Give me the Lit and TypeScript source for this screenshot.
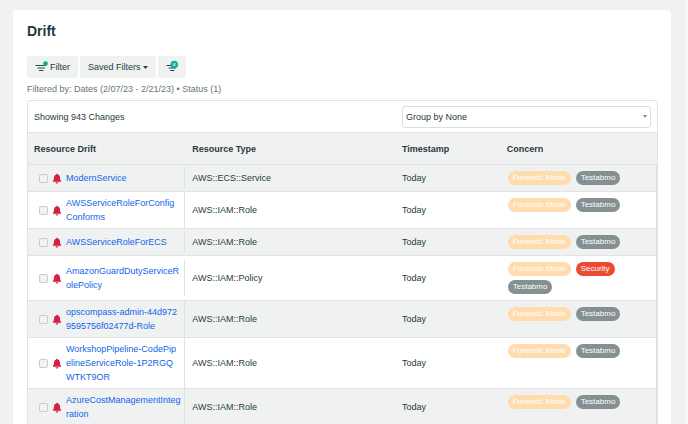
import { LitElement, html, css, svg } from "lit";
import { customElement } from "lit/decorators.js";

type Tone = "amber" | "grey" | "red";

interface Tag {
  label: string;
  tone: Tone;
}

interface DriftRow {
  // Parts of the resource name, with a break opportunity between them
  name: string[];
  type: string;
  time: string;
  tags: Tag[];
}

const FORENSIC: Tag = { label: "Forensic Mode", tone: "amber" };
const TEST: Tag = { label: "Testabmo", tone: "grey" };
const SECURITY: Tag = { label: "Security", tone: "red" };

const ROWS: DriftRow[] = [
  { name: ["ModernService"], type: "AWS::ECS::Service", time: "Today", tags: [FORENSIC, TEST] },
  { name: ["AWSServiceRoleForConfig", "Conforms"], type: "AWS::IAM::Role", time: "Today", tags: [FORENSIC, TEST] },
  { name: ["AWSServiceRoleForECS"], type: "AWS::IAM::Role", time: "Today", tags: [FORENSIC, TEST] },
  { name: ["AmazonGuardDutyServiceR", "olePolicy"], type: "AWS::IAM::Policy", time: "Today", tags: [FORENSIC, SECURITY, TEST] },
  { name: ["opscompass-admin-44d972", "9595756f02477d-Role"], type: "AWS::IAM::Role", time: "Today", tags: [FORENSIC, TEST] },
  { name: ["WorkshopPipeline-CodePip", "elineServiceRole-1P2RGQ", "WTKT9OR"], type: "AWS::IAM::Role", time: "Today", tags: [FORENSIC, TEST] },
  { name: ["AzureCostManagementInteg", "ration"], type: "AWS::IAM::Role", time: "Today", tags: [FORENSIC, TEST] },
];

const filterLines = svg`
  <path d="M1 4.5H11M3 7H9.5M4.5 9.5H8" stroke="#2f4349" stroke-width="1" fill="none" stroke-linecap="round"/>`;

@customElement("app-root")
export class AppRoot extends LitElement {
  static styles = css`
    :host {
      display: block;
      box-sizing: border-box;
      height: 100vh;
      overflow-y: auto;
      scrollbar-width: none;
      padding: 10px 15px 0 13px;
      border-right: 2px solid #f8f9f9;
      background: #f0f2f2;
      color: #263a40;
      font: 9px/14px "Liberation Sans", Arial, sans-serif;
    }
    * {
      box-sizing: border-box;
    }
    .card {
      background: #fff;
      border-radius: 4px;
      padding: 12px 13px 14px 14px;
    }
    h1 {
      margin: 0 0 16px;
      font-size: 14px;
      line-height: 18px;
    }
    .actions {
      display: flex;
      gap: 2px;
    }
    .btn {
      display: flex;
      align-items: center;
      gap: 2px;
      height: 22px;
      padding: 0 8px;
      border: 0;
      border-radius: 2px;
      background: #f0f2f2;
      color: inherit;
      font: inherit;
    }
    .icon {
      display: block;
      overflow: visible;
    }
    .summary {
      margin: 4px 0;
      color: #66757a;
    }
    .panel {
      border: 1px solid #e1e4e4;
      border-radius: 3px 3px 0 0;
    }
    .toolbar {
      display: grid;
      grid-template-columns: 7fr 5fr;
      align-items: center;
      height: 31px;
    }
    .count {
      padding-left: 6px;
    }
    .group {
      position: relative;
      margin: 0 6px 0 7px;
    }
    .select {
      display: block;
      appearance: none;
      width: 100%;
      height: 22px;
      padding: 0 3px;
      border: 1px solid #dcdfe0;
      border-radius: 3px;
      background: #fff;
      color: inherit;
      font: inherit;
    }
    .arrow {
      position: absolute;
      right: 4px;
      top: 9px;
      pointer-events: none;
    }
    table {
      width: 100%;
      table-layout: fixed;
      border-collapse: separate;
      border-spacing: 0;
    }
    .w3 {
      width: 25%;
    }
    .w4 {
      width: 33.3333%;
    }
    .w2 {
      width: 16.6667%;
    }
    th {
      height: 33px;
      padding: 0 7px;
      border-top: 1px solid #dfe3e3;
      border-bottom: 1px solid #dfe3e3;
      background: #f0f2f2;
      text-align: left;
    }
    th:first-child {
      padding-left: 6px;
    }
    td {
      padding: 4px 7px;
      border-bottom: 1px solid #dfe3e3;
      vertical-align: middle;
    }
    tbody tr:nth-child(odd) {
      background: #f0f2f2;
    }
    .first {
      padding: 0;
    }
    .resource {
      display: flex;
      align-items: center;
      padding: 4px 0 4px 11px;
      border-right: 1px solid #dfe3e3;
    }
    .check {
      appearance: none;
      flex: none;
      width: 9px;
      height: 9px;
      margin: 0 5px 0 0;
      border: 1px solid #c9cdce;
      border-radius: 2px;
      background: #f2f3f3;
    }
    .bell {
      flex: none;
      margin-right: 5px;
    }
    .link {
      flex: 1;
      min-width: 0;
      color: #1264ea;
      text-decoration: none;
    }
    .last {
      vertical-align: top;
      border-right: 1px solid #dfe3e3;
    }
    .tags {
      display: flex;
      flex-wrap: wrap;
      gap: 4px 5px;
      padding: 2px 0 2px 1px;
    }
    .tag {
      height: 14px;
      padding: 0 5px;
      border-radius: 7px;
      color: #fff;
      font-size: 8px;
      line-height: 14px;
      white-space: nowrap;
    }
    .amber {
      background: #ffdcae;
    }
    .grey {
      background: #849092;
    }
    .red {
      background: #ed4a33;
    }
  `;

  private renderRow(row: DriftRow) {
    const name = row.name.join("");
    return html`
      <tr>
        <td class="first">
          <div class="resource">
            <input class="check" type="checkbox" aria-label="Select ${name}" />
            <svg class="icon bell" width="8" height="11" viewBox="0 0 8 11" aria-hidden="true">
              <path
                d="M4 .8C4.5 .8 4.8 1.1 4.8 1.6C6.3 2 6.9 3.1 7 4.7C7.1 6.4 7.3 7.1 8.1 7.9V8.8H-.1V7.9C.7 7.1 .9 6.4 1 4.7C1.1 3.1 1.7 2 3.2 1.6C3.2 1.1 3.5 .8 4 .8ZM2.6 9.2H5.4C5.3 10.1 4.7 10.5 4 10.5S2.7 10.1 2.6 9.2Z"
                fill="#d91c45"
              />
            </svg>
            <a class="link" href="#">${row.name.map((p, i) => (i ? html`<wbr />${p}` : p))}</a>
          </div>
        </td>
        <td>${row.type}</td>
        <td>${row.time}</td>
        <td class="last">
          <div class="tags">${row.tags.map((t) => html`<span class="tag ${t.tone}">${t.label}</span>`)}</div>
        </td>
      </tr>
    `;
  }

  render() {
    return html`
      <main class="card">
        <h1>Drift</h1>
        <div class="actions">
          <button class="btn" type="button">
            <svg class="icon" width="13" height="12" viewBox="0 0 13 12" aria-hidden="true">
              ${filterLines}
              <circle cx="10.5" cy="2.6" r="2.4" fill="#08b29d" />
            </svg>
            Filter
          </button>
          <button class="btn" type="button">
            Saved Filters
            <svg class="icon" width="5" height="3" viewBox="0 0 5 3" aria-hidden="true">
              <path d="M0 0H5L2.5 3Z" fill="#263a40" />
            </svg>
          </button>
          <button class="btn" type="button" aria-label="Clear filters">
            <svg class="icon" width="12" height="12" viewBox="0 0 12 12" aria-hidden="true">
              ${filterLines}
              <circle cx="8.3" cy="3.6" r="3.8" fill="#08b29d" />
              <path d="M6.9 2.2L9.7 5M9.7 2.2L6.9 5" stroke="#fff" stroke-width=".8" />
            </svg>
          </button>
        </div>
        <p class="summary">Filtered by: Dates (2/07/23 - 2/21/23) • Status (1)</p>
        <section class="panel">
          <div class="toolbar">
            <span class="count">Showing 943 Changes</span>
            <div class="group">
              <select class="select" aria-label="Group by">
                <option>Group by None</option>
              </select>
              <svg class="icon arrow" width="4" height="3" viewBox="0 0 4 3" aria-hidden="true">
                <path d="M0 0H4L2 3Z" fill="#7d888b" />
              </svg>
            </div>
          </div>
          <table>
            <thead>
              <tr>
                <th class="w3" scope="col">Resource Drift</th>
                <th class="w4" scope="col">Resource Type</th>
                <th class="w2" scope="col">Timestamp</th>
                <th class="w3" scope="col">Concern</th>
              </tr>
            </thead>
            <tbody>
              ${ROWS.map((r) => this.renderRow(r))}
            </tbody>
          </table>
        </section>
      </main>
    `;
  }
}
